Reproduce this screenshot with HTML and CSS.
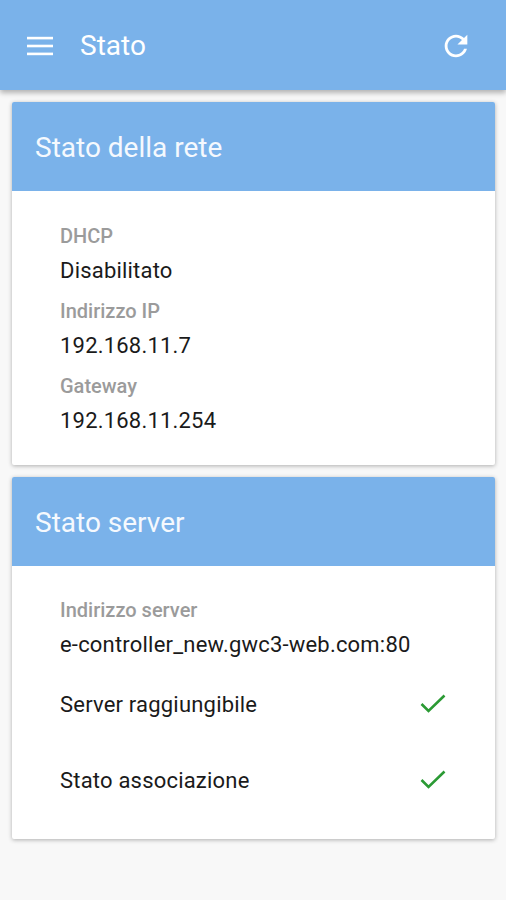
FILE: index.html
```html
<!DOCTYPE html>
<html lang="it">
<head>
<meta charset="utf-8">
<title>Stato</title>
<link rel="stylesheet" href="styles.css">
</head>
<body>
<header class="appbar">
  <svg class="menu-icon" width="34" height="34" viewBox="0 0 34 34" aria-hidden="true">
    <rect x="4" y="7.8" width="26" height="2.6" fill="#fff"/>
    <rect x="4" y="15.7" width="26" height="2.6" fill="#fff"/>
    <rect x="4" y="23.6" width="26" height="2.6" fill="#fff"/>
  </svg>
  <h1 class="appbar-title">Stato</h1>
  <svg class="refresh-icon" width="34" height="34" viewBox="0 0 24 24" aria-hidden="true">
    <path fill="#fff" d="M17.65 6.35C16.2 4.9 14.21 4 12 4c-4.42 0-7.99 3.58-7.99 8s3.57 8 7.99 8c3.73 0 6.84-2.55 7.73-6h-2.08c-.82 2.33-3.04 4-5.65 4-3.31 0-6-2.69-6-6s2.69-6 6-6c1.66 0 3.14.69 4.22 1.78L13 11h7V4l-2.35 2.35z"/>
  </svg>
</header>

<main class="content">
  <section class="card">
    <h2 class="card-header">Stato della rete</h2>
    <div class="card-body net-body">
      <div class="field">
        <div class="label">DHCP</div>
        <div class="value">Disabilitato</div>
      </div>
      <div class="field">
        <div class="label">Indirizzo IP</div>
        <div class="value">192.168.11.7</div>
      </div>
      <div class="field">
        <div class="label">Gateway</div>
        <div class="value">192.168.11.254</div>
      </div>
    </div>
  </section>

  <section class="card">
    <h2 class="card-header">Stato server</h2>
    <div class="card-body server-body">
      <div class="field">
        <div class="label">Indirizzo server</div>
        <div class="value">e-controller_new.gwc3-web.com:80</div>
      </div>
      <div class="status-list">
        <div class="status-row">
          <span class="value">Server raggiungibile</span>
          <svg class="check" width="26" height="20" viewBox="0 0 26 20" aria-hidden="true">
            <polyline points="1.5,10 8.5,17 24.5,1.5" fill="none" stroke="#2b9a34" stroke-width="2.6"/>
          </svg>
        </div>
        <div class="status-row">
          <span class="value">Stato associazione</span>
          <svg class="check" width="26" height="20" viewBox="0 0 26 20" aria-hidden="true">
            <polyline points="1.5,10 8.5,17 24.5,1.5" fill="none" stroke="#2b9a34" stroke-width="2.6"/>
          </svg>
        </div>
      </div>
    </div>
  </section>
</main>
</body>
</html>
```

FILE: styles.css
```css
* { box-sizing: border-box; }

html, body {
  margin: 0;
  padding: 0;
}

body {
  background: #f8f8f8;
  font-family: Roboto, "Noto Sans", "Liberation Sans", sans-serif;
  color: #1a1a1a;
  width: 506px;
  min-height: 900px;
}

.appbar {
  height: 90px;
  background: #7ab2ea;
  display: flex;
  align-items: center;
  padding: 2px 33px 0 23px;
  box-shadow: 0 3px 5px rgba(0, 0, 0, 0.28);
  position: relative;
  z-index: 2;
}

.menu-icon {
  display: block;
  flex: none;
}

.appbar-title {
  margin: 0 0 0 23px;
  font-size: 28px;
  font-weight: 400;
  color: #fff;
  flex: 1;
  line-height: 32px;
}

.refresh-icon {
  display: block;
  flex: none;
}

.content {
  display: flex;
  flex-direction: column;
  gap: 12px;
  padding: 12px 11px 0 12px;
}

.card {
  background: #fff;
  box-shadow: 0 1px 4px rgba(0, 0, 0, 0.3);
  border-radius: 2px;
}

.card-header {
  margin: 0;
  height: 89px;
  background: #7ab2ea;
  color: #f5f9fe;
  font-size: 28px;
  font-weight: 400;
  line-height: 32px;
  display: flex;
  align-items: center;
  padding: 2px 0 0 23px;
  border-radius: 2px 2px 0 0;
}

.card-body {
  padding-left: 48px;
  padding-right: 49px;
}

.net-body {
  padding-top: 33px;
  padding-bottom: 31px;
  display: flex;
  flex-direction: column;
  gap: 15px;
}

.server-body {
  padding-top: 32px;
  padding-bottom: 20px;
}

.field {
  display: flex;
  flex-direction: column;
  gap: 10px;
}

.label {
  font-size: 20px;
  line-height: 24px;
  font-weight: 500;
  color: #9b9b9b;
}

.value {
  font-size: 22px;
  line-height: 26px;
  letter-spacing: 0.2px;
  color: #1a1a1a;
}

.status-list {
  margin-top: 9px;
  display: flex;
  flex-direction: column;
}

.status-row {
  height: 76px;
  display: flex;
  align-items: center;
  justify-content: space-between;
}

.check {
  display: block;
  flex: none;
  margin-top: -2px;
}
```
